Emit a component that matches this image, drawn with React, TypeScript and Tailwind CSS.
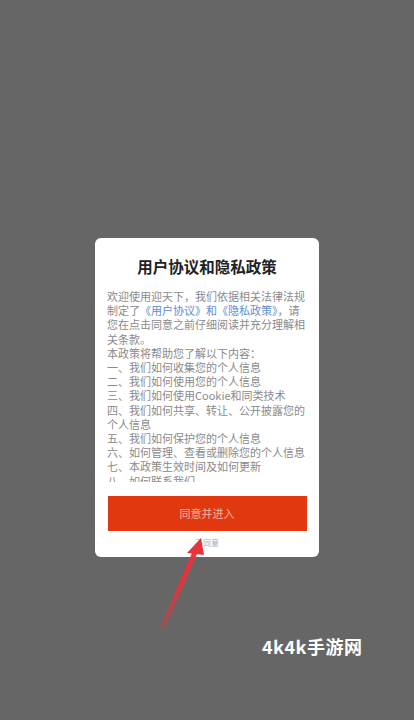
import React from 'react';

const items = [
  '一、我们如何收集您的个人信息',
  '二、我们如何使用您的个人信息',
  '三、我们如何使用Cookie和同类技术',
  '四、我们如何共享、转让、公开披露您的个人信息',
  '五、我们如何保护您的个人信息',
  '六、如何管理、查看或删除您的个人信息',
  '七、本政策生效时间及如何更新',
  '八、如何联系我们',
];

export default function App() {
  return (
    <div
      className="relative min-h-[720px] w-full overflow-hidden bg-[#666666] flex flex-col items-center pt-[238px]"
      style={{ fontFamily: '"Noto Sans CJK SC", "Noto Sans", sans-serif' }}
    >
      <div className="w-[224px] h-[319px] bg-white rounded-[6px] flex flex-col items-center">
        <h1 className="pt-[18px] text-[15.5px] leading-[20px] font-bold text-[#222]">用户协议和隐私政策</h1>
        <div className="mt-[13px] w-[200px] h-[193px] overflow-hidden text-[11px] leading-[14.2px] text-[#8a8a8a]">
          <p>
            欢迎使用迎天下，我们依据相关法律法规制定了
            <span className="text-[#5b8fd6]">《用户协议》和《隐私政策》</span>
            ，请您在点击同意之前仔细阅读并充分理解相关条款。
          </p>
          <p>本政策将帮助您了解以下内容：</p>
          {items.map((t) => (
            <p key={t}>{t}</p>
          ))}
        </div>
        <button className="mt-[14px] w-[199px] h-[35px] bg-[#e2380f] text-[#f6b8a6] text-[11px]">
          同意并进入
        </button>
        <div className="mt-[7px] text-[8px] leading-[10px] text-[#aaaaaa]">不同意</div>
      </div>

      <svg className="absolute left-0 top-0" width="414" height="720" viewBox="0 0 414 720">
        <defs>
          <linearGradient id="ag" x1="163" y1="628" x2="200" y2="540" gradientUnits="userSpaceOnUse">
            <stop offset="0" stopColor="#e8333a" stopOpacity="0.3" />
            <stop offset="0.5" stopColor="#e8333a" stopOpacity="0.9" />
            <stop offset="1" stopColor="#e8333a" />
          </linearGradient>
        </defs>
        <line x1="163" y1="626" x2="196" y2="550" stroke="url(#ag)" strokeWidth="5" strokeLinecap="round" />
        <polygon points="201,538 187,553 204,555" fill="#e8333a" />
      </svg>

      <div className="absolute left-[262px] top-[633px] text-white text-[18px] font-semibold tracking-[0.5px]">
        4k4k手游网
      </div>
    </div>
  );
}
